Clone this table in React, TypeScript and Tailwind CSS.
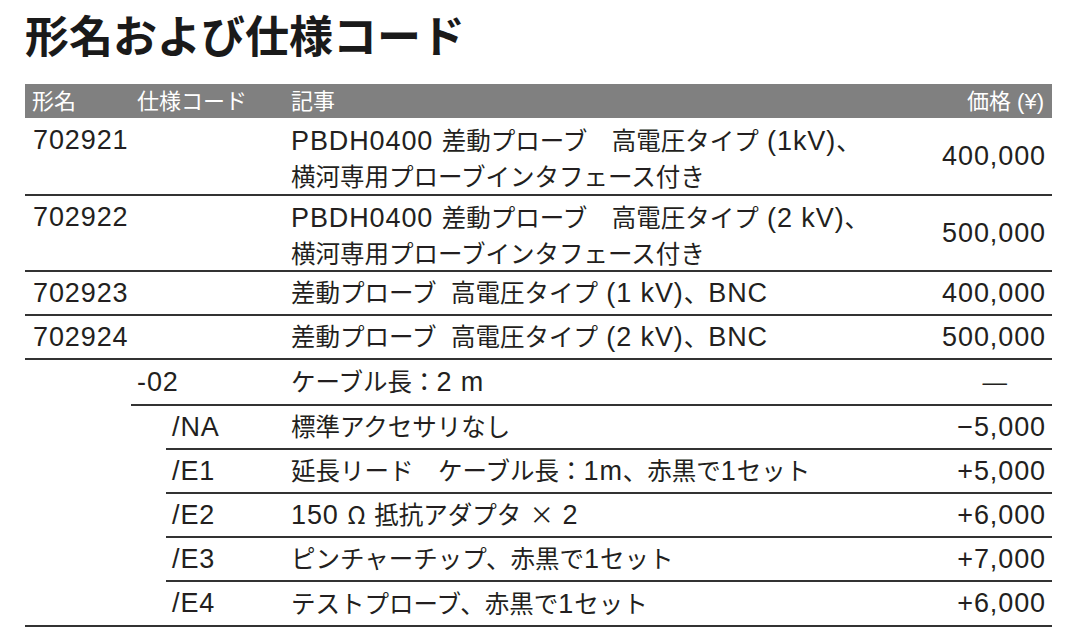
import React from "react";

function Tx({ s }: { s: string }) {
  const parts = s.split(/([\u0020-\u007E\u00A5\u2212\u2002]+)/);
  return (
    <>
      {parts.map((p, i) =>
        p === "" ? null : /^[\u0020-\u007E\u00A5\u2212\u2002]+$/.test(p) ? (
          <span key={i} className="text-[27px] tracking-[0.9px]">
            {p}
          </span>
        ) : (
          <span key={i} className="font-['Noto_Sans_CJK_JP',sans-serif]">
            {p}
          </span>
        )
      )}
    </>
  );
}

type Main = { code: string; lines: string[]; price: string };
type Sub = { code: string; desc: string; price: string };

const mains: Main[] = [
  {
    code: "702921",
    lines: ["PBDH0400 差動プローブ　高電圧タイプ (1kV)、", "横河専用プローブインタフェース付き"],
    price: "400,000",
  },
  {
    code: "702922",
    lines: ["PBDH0400 差動プローブ　高電圧タイプ (2 kV)、", "横河専用プローブインタフェース付き"],
    price: "500,000",
  },
  { code: "702923", lines: ["差動プローブ\u2002高電圧タイプ (1 kV)、BNC"], price: "400,000" },
  { code: "702924", lines: ["差動プローブ\u2002高電圧タイプ (2 kV)、BNC"], price: "500,000" },
];

const subs: Sub[] = [
  { code: "/NA", desc: "標準アクセサリなし", price: "\u22125,000" },
  { code: "/E1", desc: "延長リード　ケーブル長：1m、赤黒で1セット", price: "+5,000" },
  { code: "/E2", desc: "150 Ω 抵抗アダプタ × 2", price: "+6,000" },
  { code: "/E3", desc: "ピンチャーチップ、赤黒で1セット", price: "+7,000" },
];

export default function App() {
  return (
    <div className="w-[1079px] h-[642px] bg-white text-[#231f20] font-['Liberation_Sans','Noto_Sans_CJK_JP',sans-serif] overflow-hidden">
      <div className="pl-[25px] w-[1052px]">
        <h1 className="pt-[12px] text-[44px] leading-[44px] font-bold font-['Noto_Sans_CJK_JP',sans-serif] text-[#1a1a1a]">
          形名および仕様コード
        </h1>
        <div className="mt-[28px] h-[34px] bg-[#808080] text-white text-[22px] flex items-center">
          <div className="w-[112px] pl-[7px]">形名</div>
          <div className="w-[154px]">仕様コード</div>
          <div className="flex-1">記事</div>
          <div className="pr-[8px]">価格 (¥)</div>
        </div>

        {mains.map((m, idx) => {
          const two = m.lines.length > 1;
          return (
            <div
              key={m.code}
              className={
                two
                  ? idx === 0
                    ? "flex h-[78px] border-b-2 border-[#333333] text-[24.5px] leading-[34px] pt-[5px]"
                    : "flex h-[76px] border-b-2 border-[#333333] text-[24.5px] leading-[34px] pt-[4px]"
                  : "flex h-[44px] border-b-2 border-[#333333] text-[24.5px] leading-[34px] items-center"
              }
            >
              <div className="w-[266px] pl-[8px]">
                <Tx s={m.code} />
              </div>
              <div className="flex-1">
                {m.lines.map((l) => (
                  <div key={l}>
                    <Tx s={l} />
                  </div>
                ))}
              </div>
              <div className={two ? "pr-[6px] self-center -mt-[4px]" : "pr-[6px]"}>
                <Tx s={m.price} />
              </div>
            </div>
          );
        })}

        <div className="ml-[106px] flex h-[46px] border-b-2 border-[#333333] text-[24.5px] leading-[34px] items-center">
          <div className="w-[160px] pl-[6px]">
            <Tx s="-02" />
          </div>
          <div className="flex-1">
            <Tx s="ケーブル長：2 m" />
          </div>
          <div className="pr-[45px]">—</div>
        </div>

        {subs.map((r) => (
          <div
            key={r.code}
            className="ml-[141px] flex h-[44px] border-b-2 border-[#333333] text-[24.5px] leading-[34px] items-center"
          >
            <div className="w-[125px] pl-[6px]">
              <Tx s={r.code} />
            </div>
            <div className="flex-1">
              <Tx s={r.desc} />
            </div>
            <div className="pr-[6px]">
              <Tx s={r.price} />
            </div>
          </div>
        ))}

        <div className="flex h-[45px] border-b-2 border-[#333333] text-[24.5px] leading-[34px] items-center">
          <div className="w-[141px]" />
          <div className="w-[125px] pl-[6px]">
            <Tx s="/E4" />
          </div>
          <div className="flex-1">
            <Tx s="テストプローブ、赤黒で1セット" />
          </div>
          <div className="pr-[6px]">
            <Tx s="+6,000" />
          </div>
        </div>
      </div>
    </div>
  );
}
